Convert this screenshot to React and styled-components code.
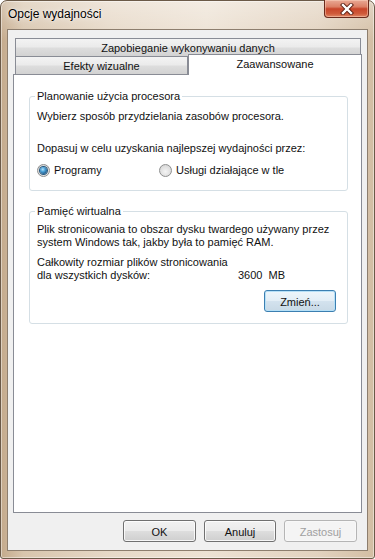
import React from 'react';
import styled, { createGlobalStyle } from 'styled-components';

const Global = createGlobalStyle`
  html, body { margin: 0; padding: 0; background: #ffffff; }
  body { font-family: "Liberation Sans", Arial, sans-serif; font-size: 11px; color: #111; }
  #root { width: 375px; height: 559px; }
`;

const Window = styled.div`
  width: 375px;
  height: 559px;
  box-sizing: border-box;
  border: 1px solid #6b5a48;
  border-radius: 7px 7px 3px 3px;
  background:
    linear-gradient(180deg, rgba(255,255,255,0.35) 0px, rgba(255,255,255,0) 40px),
    linear-gradient(90deg, #c4aa8c 0%, #d8c5ad 6%, #e7d9c8 30%, #ede2d4 55%, #e2d2bf 85%, #d3bea4 100%);
  box-shadow: inset 0 0 0 1px rgba(255,255,255,0.45);
  display: flex;
  flex-direction: column;
  padding: 0 6px 7px;
`;

const TitleBar = styled.div`
  height: 28px;
  display: flex;
  align-items: center;
  flex-shrink: 0;
`;

const Title = styled.span`
  font-size: 12px;
  color: #000;
  padding-left: 1px;
  margin-top: -2px;
  text-shadow: 0 0 6px rgba(255,255,255,0.9), 0 0 2px rgba(255,255,255,0.9);
`;

const CloseButton = styled.div`
  margin-left: auto;
  margin-right: -1px;
  align-self: flex-start;
  margin-top: -1px;
  width: 45px;
  height: 18px;
  box-sizing: border-box;
  border: 1px solid #6a2a1c;
  border-top: none;
  border-radius: 0 0 4px 4px;
  background: linear-gradient(180deg, #e9a995 0%, #dc8066 40%, #c8452a 52%, #cf5a3a 80%, #e08766 100%);
  box-shadow: inset 0 0 0 1px rgba(255,220,200,0.45);
  display: flex;
  align-items: center;
  justify-content: center;
`;

const Client = styled.div`
  flex: 1;
  display: flex;
  flex-direction: column;
  border: 1px solid #8d7e6e;
  background: #f0f0f0;
  padding: 8px 5px 0 5px;
  min-height: 0;
`;

const TabRow = styled.div`
  display: flex;
  height: 18px;
  margin: 0 ${p => p.$right || 0}px 0 2px;
  position: relative;
`;

const Tab = styled.div`
  box-sizing: border-box;
  height: 18px;
  width: ${p => (p.$width ? `${p.$width}px` : 'auto')};
  flex: ${p => (p.$width ? 'none' : 1)};
  border: 1px solid #898c95;
  border-bottom: none;
  background: linear-gradient(180deg, #f3f3f3 0%, #ebebeb 45%, #dddddd 55%, #d2d2d2 100%);
  display: flex;
  align-items: center;
  justify-content: center;
  padding-top: 1px;
  color: #111;
  white-space: nowrap;
`;

const ActiveTab = styled.div`
  box-sizing: border-box;
  flex: 1;
  margin: -2px -1px -1px 0;
  height: 21px;
  border: 1px solid #898c95;
  border-bottom: none;
  background: #ffffff;
  position: relative;
  z-index: 1;
  display: flex;
  justify-content: center;
  padding-top: 3px;
  color: #111;
  white-space: nowrap;
`;

const Panel = styled.div`
  flex: 1;
  background: #ffffff;
  border: 1px solid #898c95;
  padding: 15px 13px 0 15px;
  display: flex;
  flex-direction: column;
  gap: 14px;
`;

const Group = styled.fieldset`
  margin: 0;
  border: 1px solid #d5dfe5;
  border-radius: 3px;
  padding: 0 11px ${p => p.$bottom || 0}px 7px;
  min-width: 0;
`;

const Legend = styled.legend`
  padding: 0 2px;
  margin-left: -2px;
  line-height: 13px;
  color: #111;
`;

const Text = styled.div`
  line-height: 13px;
  margin-top: ${p => p.$top || 0}px;
  color: #111;
`;

const RadioRow = styled.div`
  display: grid;
  grid-template-columns: 122px auto;
  margin-top: ${p => p.$top || 0}px;
`;

const RadioItem = styled.label`
  display: flex;
  align-items: center;
  gap: 2px;
  line-height: 13px;
`;

const RadioCircle = styled.span`
  width: 13px;
  height: 13px;
  box-sizing: border-box;
  border-radius: 50%;
  border: 1px solid #8e8f8f;
  background: radial-gradient(circle at 50% 60%, #f4f4f4 0%, #e4e4e4 45%, #cfcfcf 100%);
  display: flex;
  align-items: center;
  justify-content: center;
  flex-shrink: 0;
  margin-right: 2px;
`;

const RadioDot = styled.span`
  width: 7px;
  height: 7px;
  border-radius: 50%;
  background: radial-gradient(circle at 40% 35%, #b6e2fb 0%, #4ea3d8 35%, #1b5a8c 75%, #0f3d66 100%);
  box-shadow: 0 0 0 1px #25577e;
`;

const SizeGrid = styled.div`
  display: grid;
  grid-template-columns: 201px auto;
  line-height: 13px;
  margin-top: 7px;
`;

const ButtonBar = styled.div`
  display: flex;
  justify-content: flex-end;
  gap: 8px;
  padding-right: ${p => p.$right || 0}px;
  margin-top: ${p => p.$top || 0}px;
  margin-bottom: ${p => p.$bottom || 0}px;
  flex-shrink: 0;
`;

const Button = styled.button`
  width: ${p => p.$width || 73}px;
  height: 22px;
  box-sizing: border-box;
  font-family: inherit;
  font-size: 11px;
  color: ${p => (p.disabled ? '#a0a0a0' : '#111')};
  border: 1px solid ${p => (p.disabled ? '#b5b5b5' : p.$default ? '#3c7fb1' : '#707070')};
  border-radius: 3px;
  background: ${p =>
    p.disabled
      ? '#f4f4f4'
      : p.$default
      ? 'linear-gradient(180deg, #eef6fb 0%, #e3eef6 48%, #d3e2ee 52%, #c8d9e6 100%)'
      : 'linear-gradient(180deg, #f2f2f2 0%, #ebebeb 48%, #dddddd 52%, #cfcfcf 100%)'};
  box-shadow: ${p =>
    p.disabled
      ? 'inset 0 0 0 1px #f8f8f8'
      : p.$default
      ? 'inset 0 0 0 1px #b6e0f7'
      : 'inset 0 0 0 1px rgba(255,255,255,0.8)'};
  padding: 0;
  padding-top: 1px;
`;

function CloseIcon() {
  return (
    <svg width="14" height="12" viewBox="0 0 14 12">
      <path d="M3 2 L11 10 M11 2 L3 10" stroke="#5a1e12" strokeWidth="4.2" strokeLinecap="square" />
      <path d="M3 2 L11 10 M11 2 L3 10" stroke="#ffffff" strokeWidth="2.4" strokeLinecap="square" />
    </svg>
  );
}

function Radio({ checked, children }) {
  return (
    <RadioItem>
      <RadioCircle>{checked && <RadioDot />}</RadioCircle>
      <span>{children}</span>
    </RadioItem>
  );
}

export default function App() {
  return (
    <>
      <Global />
      <Window>
        <TitleBar>
          <Title>Opcje wydajności</Title>
          <CloseButton>
            <CloseIcon />
          </CloseButton>
        </TitleBar>
        <Client>
          <TabRow $right={1}>
            <Tab>Zapobieganie wykonywaniu danych</Tab>
          </TabRow>
          <TabRow $right={1}>
            <Tab $width={173}>Efekty wizualne</Tab>
            <ActiveTab>Zaawansowane</ActiveTab>
          </TabRow>
          <Panel>
            <Group $bottom={13}>
              <Legend>Planowanie użycia procesora</Legend>
              <Text $top={7}>Wybierz sposób przydzielania zasobów procesora.</Text>
              <Text $top={19}>Dopasuj w celu uzyskania najlepszej wydajności przez:</Text>
              <RadioRow $top={9}>
                <Radio checked>Programy</Radio>
                <Radio>Usługi działające w tle</Radio>
              </RadioRow>
            </Group>
            <Group $bottom={11}>
              <Legend>Pamięć wirtualna</Legend>
              <Text $top={5}>Plik stronicowania to obszar dysku twardego używany przez</Text>
              <Text>system Windows tak, jakby była to pamięć RAM.</Text>
              <SizeGrid>
                <span>Całkowity rozmiar plików stronicowania</span>
                <span />
                <span>dla wszystkich dysków:</span>
                <span>3600&nbsp;&nbsp;MB</span>
              </SizeGrid>
              <ButtonBar $top={8}>
                <Button $default $width={72}>Zmień...</Button>
              </ButtonBar>
            </Group>
          </Panel>
          <ButtonBar $right={5} $top={7} $bottom={8}>
            <Button>OK</Button>
            <Button $width={72}>Anuluj</Button>
            <Button disabled>Zastosuj</Button>
          </ButtonBar>
        </Client>
      </Window>
    </>
  );
}
